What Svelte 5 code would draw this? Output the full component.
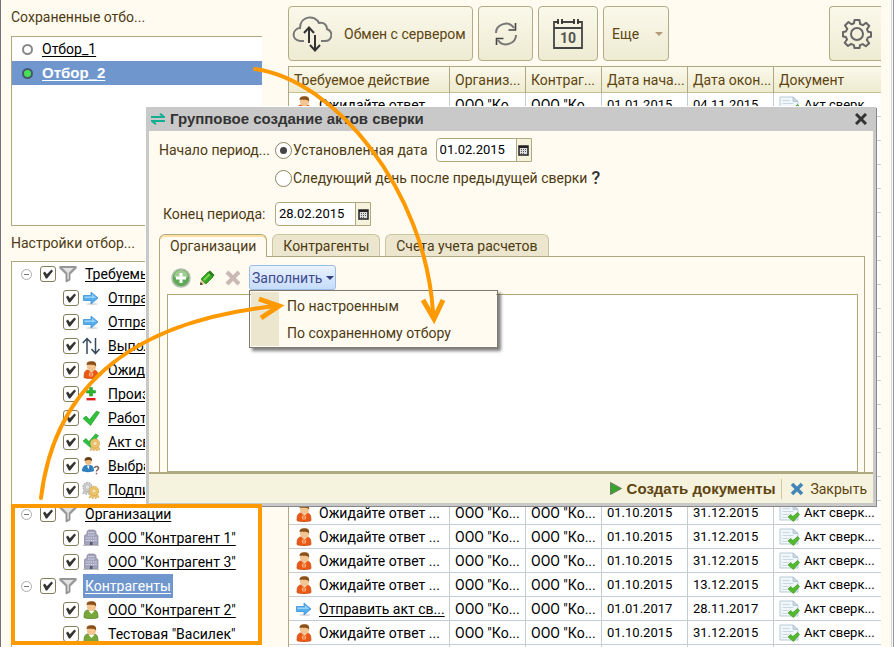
<script>
  const waiting = 'Ожидайте ответ ...';
  const period = (from, to, action = waiting, icon = 'person') => ({ action, icon, from, to });
  const rows = [
    period('01.01.2015', '04.11.2015'),
    ...Array.from({ length: 19 }, () => period('01.10.2015', '31.12.2015')),
    period('01.10.2015', '13.12.2015'),
    period('01.01.2017', '28.11.2017', 'Отправить акт св...', 'arrow'),
    period('01.10.2015', '31.12.2015')
  ];
  const columns = ['Требуемое действие', 'Организ...', 'Контраг...', 'Дата нача...', 'Дата окон...', 'Документ'];

  const tree = [
    {
      title: 'Требуемые',
      items: [
        ['arrow', 'Отправить'],
        ['arrow', 'Отправить'],
        ['updown', 'Выполнить'],
        ['person', 'Ожидайте'],
        ['plusminus', 'Произвести'],
        ['check', 'Работа'],
        ['checkseal', 'Акт сверки'],
        ['question', 'Выбрать'],
        ['seals', 'Подписать']
      ]
    },
    {
      title: 'Организации',
      items: [['building', 'ООО "Контрагент 1"'], ['building', 'ООО "Контрагент 3"']]
    },
    {
      title: 'Контрагенты',
      selected: true,
      items: [['green', 'ООО "Контрагент 2"'], ['green', 'Тестовая "Василек"']]
    }
  ];
  const tabs = ['Организации', 'Контрагенты', 'Счета учета расчетов'];
</script>

{#snippet seal(x, y, fill, edge)}
  <g transform="translate({x} {y})" stroke={edge} stroke-width=".6">
    <path d="M-3 2l-2 5 2.500-1 1.500 2 1-4 1.500 4 1.500-2 2 .5-2-5z" fill={fill} />
    <circle r="4.600" fill={fill} stroke-width="1" stroke-dasharray="2 .8" />
    <circle r="2.200" fill="#fff" fill-opacity=".5" />
  </g>
{/snippet}

{#snippet bust(coat, edge)}
  <path d="M2 16.500c0-5 1-7 3.500-7.500h7c2.500.5 3.500 2.500 3.500 7.500-2 1.500-12 1.500-14 0z" fill={coat} stroke={edge} stroke-width=".7" />
  <ellipse cx="9.500" cy="5.500" rx="4.600" ry="4.800" fill="#f3c592" />
  <path d="M4.500 4.500C4.500 1 6 .2 9.500.2s5 1.300 4.600 5.300C12.500 3 8.500 4 4.500 3.500z" fill="#8a5219" />
{/snippet}

{#snippet icon(name)}
  <svg class="icon" viewBox="0 0 18 18" aria-hidden="true">
    {#if name === 'arrow'}
      <ellipse cx="10" cy="15" rx="6" ry="1.200" fill="#ddd" />
      <path d="M1.500 6.500h7.500V3l7 6-7 6v-3.500H1.500z" fill="#54aef0" stroke="#3d8fd2" stroke-width=".8" />
      <path d="M2.500 7.500H10V5.200L14 9H2.500z" fill="#9bd4fa" />
    {:else if name === 'person'}
      {@render bust('#ea5a14', '#c9480a')}
      <path d="M7 9.800l2.500 1.700 2.500-1.700z" fill="#f7d0a0" />
      <circle cx="9" cy="13.400" r="2.200" fill="#ffb48b" />
      <path d="M9 12v2.800" stroke="#e8540f" />
    {:else if name === 'green'}
      {@render bust('#79a83a', '#4f7a1c')}
      <path d="M6.500 9.800L9.500 13l3-3.200z" fill="#fff" />
    {:else if name === 'updown'}
      <path d="M5 17V1.500M.8 6L5 1.500 9.200 6M13.500 1v15.500M9.500 12l4 4.500 4-4.500" fill="none" stroke="#34495e" stroke-width="1.500" />
    {:else if name === 'plusminus'}
      <path d="M7.500 2.500h3v3h3v2.500h-3V11h-3V8h-3V5.500h3z" fill="#29b52d" stroke="#168a1b" stroke-width=".5" />
      <path d="M4.500 13h9v2.400h-9z" fill="#e01b1b" />
    {:else if name === 'check'}
      <path d="M1 9.500l3-2.500 3.500 3.500L14.500 2l3 1.500-9 13z" fill="#2fbf3a" stroke="#1f9a2a" stroke-width=".6" />
    {:else if name === 'checkseal'}
      <path d="M1 8l3-2.500 3 3L13.500 1l3 1.500-8 12z" fill="#2fbf3a" stroke="#1f9a2a" stroke-width=".6" />
      {@render seal(13, 10.500, '#efc46c', '#d3a550')}
    {:else if name === 'question'}
      <path d="M0 14c0-4 2-5.500 4-6h4.500c2 .5 3.500 2 3.500 6-2 1.500-10 1.500-12 0z" fill="#2f80bd" />
      <path d="M5 8.500l1.300 4 1.300-4z" fill="#fff" />
      <circle cx="6.300" cy="4.500" r="3.400" fill="#edbd84" />
      <path d="M2.500 4C2.500 1 4 0 6.500 0S10.300 1.500 10 4C8 2.500 5 3 2.500 4z" fill="#684018" />
      <path d="M12.500 11c.5-2.300 4.500-1.800 4 .5-.3 1.300-2 1.300-2 3m0 1.200v1.500" fill="none" stroke="#8b625a" stroke-width="1.500" />
    {:else if name === 'seals'}
      {@render seal(5.500, 6, '#cfcfcf', '#aaa')}
      {@render seal(12, 10, '#efc763', '#d3a550')}
    {:else if name === 'building'}
      <path d="M2.500 15.500V6.500L5 5V2.500L6.500 1h6L14 2.500V5l2 1.500v9z" fill="#a3a3bd" stroke="#84849d" stroke-width=".7" />
      <path d="M6 3.500h7M6 6h7M4 9h11M4 11.500h11" stroke="#d9d9ea" stroke-width="1.200" stroke-dasharray="1.500 .8" />
      <path d="M8 13h2.500v3H8z" fill="#55556c" />
      <path d="M1 16.500h16" stroke="#bbb" />
    {:else if name === 'funnel'}
      <path d="M.8 1.500h16.400v1.800l-6.200 6V15l-4 2V9.300l-6.200-6z" fill="#9a9a9a" stroke="#858585" stroke-width=".8" />
      <path d="M3.500 3h11L9.800 7.800v6.200l-1.300.7V8z" fill="#e2e2e2" />
    {/if}
  </svg>
{/snippet}

{#snippet docIcon()}
  <svg class="doc" viewBox="0 0 21 18" aria-hidden="true">
    <path d="M1 1h13l5 4.500V16H1z" fill="#f1f6fa" stroke="#b7cad7" />
    <path d="M14 1v4.500h5z" fill="#cbdae5" stroke="#a7bccb" stroke-width=".7" />
    <path d="M3.500 4.500H11M3.500 7.500h11M3.500 10.500h6M3.500 13.500h5" stroke="#c9d8e3" />
    <path d="M9 13l2.500-2.500 2.500 2L18.500 8.500l2 2-6 7z" fill="#52b82d" stroke="#3b9a20" stroke-width=".7" />
  </svg>
{/snippet}

{#snippet dateField(id, value, label)}
  <span class="date">
    <input {id} type="text" {value} aria-label={label} />
    <button type="button" aria-label="Выбрать дату">
      <svg viewBox="0 0 11 11" width="11" height="11" aria-hidden="true">
        <path d="M1 1h9v9H1z" fill="#ddd" stroke="#222" stroke-width="1.500" />
        <path d="M1 2h9" stroke="#222" stroke-width="2" />
        <path d="M3 4.500h5M3 6.500h5M3 8.500h3" stroke="#555" stroke-dasharray="1 1" />
      </svg>
    </button>
  </span>
{/snippet}

<div class="page">
  <aside>
    <h2 class="saved-title">Сохраненные отбо...</h2>
    <ul class="saved">
      <li><span class="dot"></span><a href="#filter-1">Отбор_1</a></li>
      <li class="active"><span class="dot"></span><a href="#filter-2">Отбор_2</a></li>
    </ul>
    <h2 class="settings-title">Настройки отбор...</h2>
    <div class="tree">
      {#each tree as group, g}
        <div class="node group">
          <button type="button" class="toggle" aria-label="Свернуть"></button>
          <input type="checkbox" checked id="g{g}" />
          {@render icon('funnel')}
          <label for="g{g}" class:selected={group.selected}>{group.title}</label>
        </div>
        {#each group.items as [kind, title], i}
          <div class="node child">
            <input type="checkbox" checked id="g{g}i{i}" />
            {@render icon(kind)}
            <label for="g{g}i{i}">{title}</label>
          </div>
        {/each}
      {/each}
    </div>
  </aside>

  <main>
    <div class="toolbar">
      <button type="button" class="tool exchange">
        <svg viewBox="0 0 40 38" width="40" height="38" fill="none" aria-hidden="true">
          <path d="M12 26H8C-1 25 0 14 8 13 8 1 23-1 27 8c6-1 8 3 8 6 7 3 5 12-2 12h-4" stroke="#777" stroke-width="2" />
          <path d="M17 28V13m-5 5l5-5.500 5 5.500M23 20v15m-5-5l5 5.500 5-5.500" stroke="#333" stroke-width="2" />
        </svg>
        <span>Обмен с сервером</span>
      </button>
      <button type="button" class="tool refresh" aria-label="Обновить">
        <svg viewBox="0 0 24 24" width="24" height="24" fill="none" stroke="#777" stroke-width="2" aria-hidden="true">
          <path d="M2 11C2 2 15-2 20 6M22 13c0 9-13 13-18 5" />
          <path d="M21.500 1v7h-7M2.500 23v-6.500h7" stroke="#444" stroke-width="1.600" />
        </svg>
      </button>
      <button type="button" class="tool calendar" aria-label="Календарь">
        <svg viewBox="0 0 32 32" width="32" height="32" fill="none" aria-hidden="true">
          <path d="M2 4h28v26H2zM2 10h28" stroke="#444" stroke-width="1.800" />
          <path d="M7 4h2m14 0h2" stroke="#f5f3df" stroke-width="3" />
          <path d="M6 1v5m4-5v5m12-5v5m4-5v5" stroke="#333" stroke-width="1.800" />
          <text x="16" y="25" text-anchor="middle" font-size="14" font-weight="bold" fill="#555">10</text>
        </svg>
      </button>
      <button type="button" class="tool more"><span>Еще</span><i class="caret"></i></button>
      <button type="button" class="tool gear" aria-label="Настройки">
        <svg viewBox="0 0 30 30" width="30" height="30" fill="none" stroke="#666" stroke-width="2" stroke-linejoin="round" aria-hidden="true">
          <path d="M12.500 1h5l.6 4 2.800 1.200L24 3.700l3.300 3.300-2.300 3.200 1 2.500 3 .5v4.500l-3 .7-1.200 2.600 2.400 3.300-3.300 3-3.200-2.200-2.700 1-.5 3h-5l-.6-3-2.800-1.200L6 27l-3.300-3.200L5 20.500l-1-2.400-3-.5V13l3-.6 1.200-2.600L3 6.500 6.500 3l3 2.200 2.500-1z" />
          <circle cx="15" cy="15" r="6" />
        </svg>
      </button>
    </div>
    <table>
      <colgroup><col class="c1" /><col class="c2" /><col class="c2" /><col class="c3" /><col class="c3" /><col /></colgroup>
      <thead>
        <tr>{#each columns as c}<th>{c}</th>{/each}</tr>
      </thead>
      <tbody>
        {#each rows as r}
          <tr>
            <td class="action">
              <div>{@render icon(r.icon)}{#if r.icon === 'arrow'}<a href="#send">{r.action}</a>{:else}<span>{r.action}</span>{/if}</div>
            </td>
            <td>ООО "Ко...</td>
            <td>ООО "Ко...</td>
            <td class="small">{r.from}</td>
            <td class="small">{r.to}</td>
            <td class="small"><div>{@render docIcon()}<span>Акт сверк...</span></div></td>
          </tr>
        {/each}
        <tr>{#each columns as c}<td></td>{/each}</tr>
      </tbody>
    </table>
  </main>
  <div class="edge"></div>

  <section class="dialog" role="dialog" aria-labelledby="dialog-title">
    <header>
      <svg viewBox="0 0 14 12" width="14" height="12" fill="none" stroke="#12ae92" stroke-width="2" aria-hidden="true">
        <path d="M0 4h13L9 .8M14 8H1l4 3.200" />
      </svg>
      <h1 id="dialog-title">Групповое создание актов сверки</h1>
      <button type="button" class="close" aria-label="Закрыть окно">
        <svg viewBox="0 0 12 12" width="12" height="12" stroke="#333" stroke-width="3" aria-hidden="true"><path d="M1 1l10 10M11 1L1 11" /></svg>
      </button>
    </header>

    <div class="form">
      <span class="name">Начало период...</span>
      <div class="field">
        <input type="radio" name="start" id="fixed" checked />
        <label for="fixed">Установленная дата</label>
        {@render dateField('start-date', '01.02.2015', 'Начало периода')}
      </div>
      <div class="field second">
        <input type="radio" name="start" id="next" />
        <label for="next">Следующий день после предыдущей сверки</label>
        <button type="button" class="help">?</button>
      </div>
      <label class="name end" for="end-date">Конец периода:</label>
      <div class="field">{@render dateField('end-date', '28.02.2015', 'Конец периода')}</div>
    </div>

    <div class="tabs" role="tablist">
      {#each tabs as t, i}
        <button type="button" role="tab" aria-selected={i === 0} class:current={i === 0}>{t}</button>
      {/each}
    </div>
    <div class="panel">
      <div class="commands">
        <button type="button" aria-label="Добавить">
          <svg viewBox="0 0 20 20" width="20" height="20" aria-hidden="true">
            <circle cx="10" cy="10" r="9" fill="#5eaa55" stroke="#b4bcae" stroke-width="1.500" />
            <path d="M3 9a7 7 0 0 1 14 0c-4 2-10 2-14 0z" fill="#9dcc91" />
            <path d="M10 5v10M5 10h10" stroke="#fff" stroke-width="3" />
          </svg>
        </button>
        <button type="button" aria-label="Изменить">
          <svg viewBox="0 0 16 16" width="16" height="16" aria-hidden="true">
            <path d="M1 15l1-6 5 5z" fill="#e4c897" />
            <path d="M1 15l.5-3 2.500 2.500z" fill="#333" />
            <path d="M2 9l7-7 5 5-7 7z" fill="#32a51c" stroke="#218410" stroke-width=".7" />
            <path d="M4 9.500l6-6 1.500 1.500-6 6z" fill="#78d357" />
            <path d="M9 2l2-1.500L15.500 5 14 7z" fill="#287c19" />
          </svg>
        </button>
        <button type="button" aria-label="Удалить">
          <svg viewBox="0 0 16 16" width="16" height="16" stroke="#c9b8b4" stroke-width="4" aria-hidden="true"><path d="M2 2l12 12M14 2L2 14" /></svg>
        </button>
        <div class="fill">
          <button type="button" class="fill-button">Заполнить<i class="caret"></i></button>
          <div class="menu" role="menu">
            <button type="button" role="menuitem">По настроенным</button>
            <button type="button" role="menuitem">По сохраненному отбору</button>
          </div>
        </div>
      </div>
      <div class="list"></div>
    </div>

    <footer>
      <button type="button" class="create">
        <svg viewBox="0 0 12 13" width="12" height="13" aria-hidden="true"><path d="M.5 .5l11 6-11 6z" fill="#37a52b" stroke="#6c7a63" /></svg>
        <span>Создать документы</span>
      </button>
      <button type="button" class="cancel">
        <svg viewBox="0 0 14 14" width="14" height="14" stroke="#4386b5" stroke-width="3.500" aria-hidden="true"><path d="M2 2l10 10M12 2L2 12" /></svg>
        <span>Закрыть</span>
      </button>
    </footer>
  </section>

  <svg class="marks" viewBox="0 0 894 647" width="894" height="647" fill="none" stroke="#ff9900" stroke-width="4" aria-hidden="true">
    <rect x="13" y="506" width="247" height="137" />
    <path d="M255 69C335 80 425 190 433 312" stroke-linecap="round" />
    <path d="M423 300l11 19 9-19" stroke-width="5" />
    <path d="M41 498C55 380 140 320 276 306" stroke-linecap="round" />
    <path d="M259 299l20 7-18 12" stroke-width="5" />
  </svg>
</div>

<style>
  :global(body) { margin: 0; background: #fffbf0; }
  .page {
    position: relative;
    display: flex;
    height: 100vh;
    overflow: hidden;
    box-sizing: border-box;
    border-left: 1px solid #77727a;
    background: #fffbf0;
    color: #000;
    font: 14px/16px Roboto, "Liberation Sans", sans-serif;
  }
  button, input { font: inherit; color: inherit; margin: 0; padding: 0; box-sizing: border-box; }
  button { background: none; border: 0; display: flex; align-items: center; white-space: nowrap; }
  a { color: inherit; text-underline-offset: 2px; text-decoration-skip-ink: none; }
  svg { flex: none; display: block; }
  .icon { width: 18px; height: 18px; }

  aside { width: 251px; margin-left: 10px; display: flex; flex-direction: column; flex: none; }
  h2 { margin: 0; font-size: 14px; font-weight: 400; color: #4d3a12; flex: none; }
  .saved-title { line-height: 34px; height: 36px; }
  .settings-title { line-height: 35px; height: 35px; }
  .saved {
    list-style: none; margin: 0; padding: 0; height: 190px; flex: none; box-sizing: border-box;
    border: 1px solid #b0a880; border-right: 0; background: #fff;
  }
  .saved li { display: flex; align-items: center; height: 24px; padding-left: 10px; gap: 9px; }
  .saved .active { background: #6f97ce; color: #fff; font: 700 15px/16px "Liberation Sans", sans-serif; }
  .dot { width: 11px; height: 11px; box-sizing: border-box; border: 2px solid #888; border-radius: 50%; }
  .active .dot { background: #46e254; border-color: #44566e; }

  .tree { flex: 1; min-height: 0; overflow: hidden; border: 1px solid #b0a880; border-width: 1px 0 0 1px; background: #fff; }
  .node { display: flex; align-items: center; height: 24px; white-space: nowrap; }
  .node label { margin-left: 8px; text-decoration: underline; text-decoration-skip-ink: none; text-underline-offset: 2px; }
  .node .icon { margin-left: 3px; }
  .group { padding-left: 9px; }
  .child { padding-left: 51px; }
  .toggle { width: 11px; height: 11px; margin-right: 8px; border: 1px solid #aaa; border-radius: 50%; justify-content: center; }
  .toggle::before { content: ""; width: 5px; height: 1px; background: #777; }
  .node label.selected { background: #6f97ce; color: #fff; margin-left: 6px; padding: 4px 2px; }
  input[type="checkbox"] {
    appearance: none; width: 16px; height: 16px; flex: none; display: grid; place-items: center;
    border: 1px solid #857e58; border-radius: 3px; background: #fff;
  }
  input[type="checkbox"]::before {
    content: ""; width: 10px; height: 10px; background: #333;
    clip-path: polygon(0 40%, 20% 25%, 38% 52%, 85% 5%, 100% 20%, 42% 95%, 28% 95%);
  }

  main { flex: 1; min-width: 0; margin: 6px 0 0 26px; }
  .toolbar { display: flex; gap: 5px; height: 55px; margin-bottom: 5px; }
  .tool {
    height: 55px; border: 1px solid #b3ab83; border-radius: 4px; justify-content: center;
    background: linear-gradient(#faf8ea, #eeebd3); color: #5d4410;
  }
  .exchange { width: 185px; justify-content: flex-start; padding-left: 3px; gap: 12px; }
  .refresh { width: 55px; }
  .calendar { width: 60px; }
  .more { width: 66px; justify-content: space-between; padding: 0 5px 0 8px; }
  .gear { width: 52px; margin-left: auto; padding-left: 2px; border-right: 0; border-radius: 4px 0 0 4px; }
  .caret { border: 4px solid transparent; border-top-color: #b59a7a; border-bottom: 0; }

  table { width: 100%; table-layout: fixed; border-spacing: 0; border: 1px solid #b0a880; border-width: 1px 0 0 1px; background: #fff; }
  .c1 { width: 161px; }
  .c2 { width: 76px; }
  .c3 { width: 86px; }
  th, td { box-sizing: border-box; padding: 0 0 0 5px; text-align: left; white-space: nowrap; overflow: hidden; font-weight: 400; }
  th { height: 26px; border-right: 1px solid #b0a880; border-bottom: 1px solid #c9bf94; background: linear-gradient(#faf8ea, #eeebd0); color: #5d4410; }
  td { height: 24px; border-right: 1px solid #c5cdd3; border-bottom: 1px solid #c5cdd3; }
  .small { font-size: 13px; }
  th:last-child, td:last-child { border-right: 0; }
  td div { display: flex; align-items: center; gap: 4px; }
  .action div { gap: 6px; margin-left: 1px; }
  .doc { width: 21px; height: 18px; }
  .edge { flex: none; width: 3px; margin-left: 10px; border-left: 1px solid #d5d3dc; border-right: 1px solid #9a98a0; box-sizing: border-box; background: #f7f7fa; }

  .dialog {
    position: absolute; left: 145px; right: 18px; top: 107px; box-sizing: border-box;
    border: 3px solid #c9c9c9; border-top: 0; background: #fffbf0; color: #4d3a12;
    box-shadow: 1px 1px 0 #888, -1px -1px 0 #fff;
  }
  header { display: flex; align-items: center; gap: 5px; height: 24px; padding: 0 6px 0 2px; background: #c9c9c9; color: #333; }
  h1 { margin: 0; flex: 1; font: 700 15px/16px "Liberation Sans", sans-serif; }
  .form { display: grid; grid-template-columns: 116px 1fr; row-gap: 4px; padding: 7px 0 0 10px; align-items: center; }
  .second { grid-column: 2; }
  .name.end { padding-left: 4px; }
  .form .field { display: flex; align-items: center; height: 24px; white-space: nowrap; }
  .form .second { margin-bottom: 8px; }
  .field label { margin-left: 1px; }
  .field .date { margin-left: 8px; }
  .field .date:first-child { margin-left: 0; }
  input[type="radio"] {
    appearance: none; width: 17px; height: 17px; flex: none; display: grid; place-items: center;
    border: 1px solid #8d865f; border-radius: 50%; background: #fff;
  }
  input[type="radio"]:checked::before { content: ""; width: 7px; height: 7px; border-radius: 50%; background: #444; }
  .date { display: flex; height: 24px; width: 96px; box-sizing: border-box; border: 1px solid #b0a880; border-radius: 4px 0 0 4px; background: #fff; color: #000; }
  .date input { flex: 1; min-width: 0; border: 0; background: none; padding-left: 3px; font-size: 13px; }
  .date button { width: 15px; justify-content: center; border-left: 1px solid #b0a880; background: #f5f2dd; }
  .help { margin-left: 4px; font-size: 18px; font-weight: 500; color: #333; }

  .tabs { display: flex; gap: 5px; height: 22px; margin: 8px 8px 0 10px; }
  .tabs button { height: 22px; padding: 0 10px; border: 1px solid #cbc4a0; border-bottom: 0; border-radius: 6px 6px 0 0; background: #ebe6cd; color: #4d3a12; }
  .tabs .current { height: 23px; background: #fffbf0; border-color: #b0a880; box-shadow: inset 0 2px 0 #ffe0a0; position: relative; }
  .panel { margin: 0 8px 0 10px; padding: 8px 6px 0 7px; border: 1px solid #b0a880; border-bottom: 0; }
  .commands { display: flex; align-items: center; height: 25px; padding-left: 4px; gap: 8px; }
  .commands > button:nth-child(2) { margin-right: 2px; }
  .fill { position: relative; }
  .fill-button { height: 25px; padding: 0 1px 0 2px; gap: 4px; border: 1px solid #9dbce3; border-radius: 3px; background: linear-gradient(#eaf2ff, #c5dcfb); color: #3e4a8c; }
  .fill-button .caret { border-top-color: #333f80; }
  .menu {
    position: absolute; z-index: 1; top: 25px; left: 0; width: 249px; box-sizing: border-box; padding: 1px;
    border: 1px solid #80796a; background: linear-gradient(90deg, #ebe6cd 28px, #fffbf0 28px); background-origin: content-box;
    background-clip: content-box; background-color: #fffbf0; box-shadow: 3px 3px 3px rgba(0, 0, 0, 0.5);
  }
  .menu button { width: 100%; height: 27px; padding-left: 36px; }
  .list { height: 178px; margin-top: 4px; box-sizing: border-box; border: 1px solid #b0a880; background: #fff; }
  footer { display: flex; justify-content: flex-end; align-items: center; height: 31px; box-sizing: border-box; padding-right: 6px; border-top: 2px solid #b0a880; background: #f5f2dd; color: #5d4410; }
  .create { gap: 5px; padding-right: 6px; font: 700 15px/16px "Liberation Sans", sans-serif; }
  .cancel { gap: 6px; padding-left: 8px; border-left: 1px solid #cfc8a6; height: 20px; }
  .marks { position: absolute; left: -1px; top: 0; z-index: 2; pointer-events: none; }
</style>
